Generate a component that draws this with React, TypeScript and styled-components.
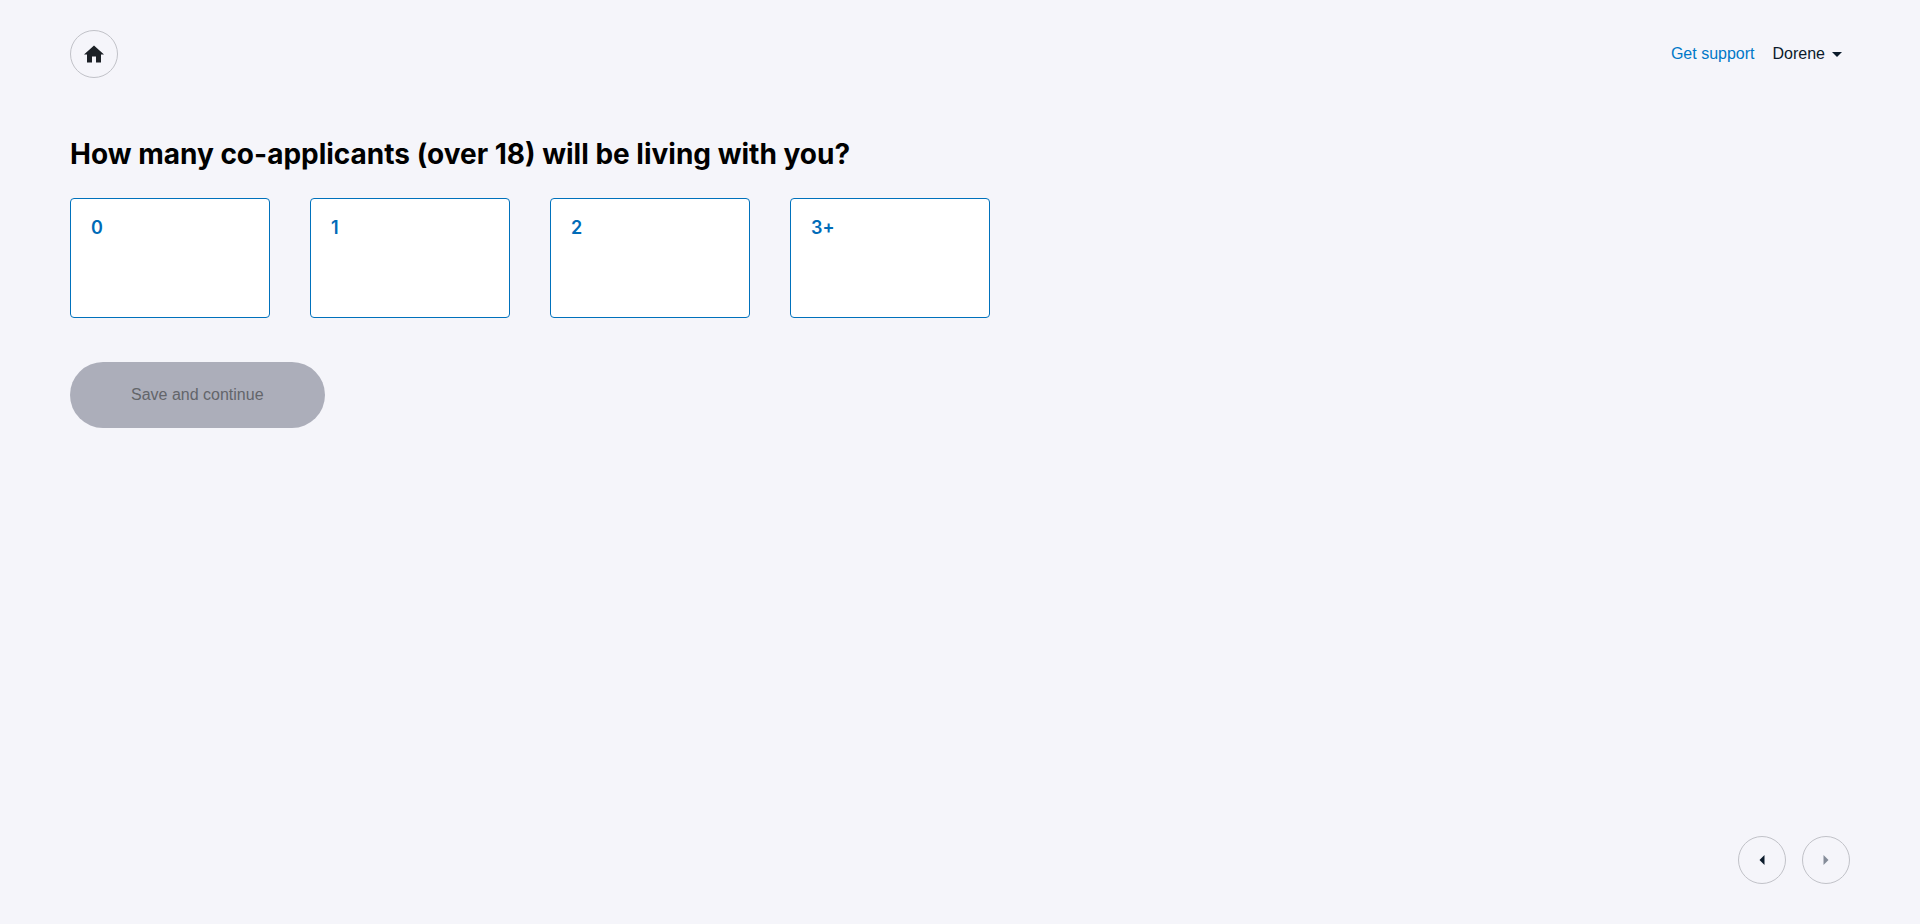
import React, { useState } from "react";
import styled, { createGlobalStyle } from "styled-components";

const GlobalStyle = createGlobalStyle`
  *, *::before, *::after { box-sizing: border-box; }
  body {
    margin: 0;
    background: #f5f5fa;
    color: #0b1b2b;
    font-family: "Liberation Sans", Arial, sans-serif;
    font-size: 16px;
    line-height: 24px;
  }
  button { font: inherit; cursor: pointer; }
  button:disabled { cursor: default; }
`;

const Page = styled.div`
  display: flex;
  flex-direction: column;
  min-height: 100vh;
  padding: 30px 70px 40px;
`;

const Header = styled.header`
  display: flex;
  align-items: center;
  justify-content: space-between;
`;

const Account = styled.nav`
  display: flex;
  align-items: center;
  gap: 18px;
`;

const SupportLink = styled.a`
  color: #0078c8;
  text-decoration: none;
`;

const UserMenu = styled.button`
  display: flex;
  align-items: center;
  gap: 7px;
  padding: 0 8px 0 0;
  border: 0;
  background: none;
  color: #0b1b2b;
`;

const RoundButton = styled.button`
  display: flex;
  align-items: center;
  justify-content: center;
  width: 48px;
  height: 48px;
  padding: 0;
  border: 1px solid #c1c2c8;
  border-radius: 50%;
  background: transparent;
  color: #0b1b2b;

  &:disabled { color: #858c99; }
`;

const Main = styled.main`
  display: flex;
  flex: 1;
  flex-direction: column;
  align-items: flex-start;
  padding-top: 56px;
`;

const Question = styled.h1`
  margin: 0 0 24px;
  color: #000;
  font-family: Inter, sans-serif;
  font-size: 28px;
  font-weight: 700;
  line-height: 40px;
`;

const Options = styled.div`
  display: flex;
  flex-wrap: wrap;
  gap: 40px;
`;

const OptionCard = styled.button<{ $selected: boolean }>`
  display: flex;
  align-items: flex-start;
  width: 200px;
  height: 120px;
  padding: 16px 20px;
  border: 1px solid #0071bc;
  border-radius: 4px;
  background: ${(p) => (p.$selected ? "#e3f1fb" : "#fff")};
  color: #006bb8;
  font-family: Inter, sans-serif;
  font-size: 18px;
  font-weight: 600;
  line-height: 26px;
`;

const SaveButton = styled.button`
  height: 66px;
  margin-top: 44px;
  padding: 0 61px;
  border: 0;
  border-radius: 33px;
  background: #0071bc;
  color: #fff;

  &:disabled {
    background: #acaeba;
    color: #63656a;
  }
`;

const Pager = styled.footer`
  display: flex;
  justify-content: flex-end;
  gap: 16px;
`;

const HomeIcon = () => (
  <svg width="24" height="24" viewBox="0 0 24 24" fill="#1c2126" aria-hidden="true">
    <path d="M10 20.5v-6h4v6h5v-8h3l-10-9-10 9h3v8z" />
  </svg>
);

const CaretDown = () => (
  <svg width="10" height="5" viewBox="0 0 10 5" fill="currentColor" aria-hidden="true">
    <path d="M0 0h10L5 5z" />
  </svg>
);

const CaretLeft = () => (
  <svg width="6" height="10" viewBox="0 0 6 10" fill="currentColor" aria-hidden="true">
    <path d="M5.5 0v10L.5 5z" />
  </svg>
);

const CaretRight = () => (
  <svg width="6" height="10" viewBox="0 0 6 10" fill="currentColor" aria-hidden="true">
    <path d="M.5 0v10l5-5z" />
  </svg>
);

const choices = ["0", "1", "2", "3+"];

export default function App() {
  const [selected, setSelected] = useState<string | null>(null);

  return (
    <>
      <GlobalStyle />
      <Page>
        <Header>
          <RoundButton type="button" aria-label="Home">
            <HomeIcon />
          </RoundButton>
          <Account>
            <SupportLink href="#support">Get support</SupportLink>
            <UserMenu type="button" aria-haspopup="menu">
              Dorene
              <CaretDown />
            </UserMenu>
          </Account>
        </Header>
        <Main>
          <Question id="question">How many co-applicants (over 18) will be living with you?</Question>
          <Options role="group" aria-labelledby="question">
            {choices.map((choice) => (
              <OptionCard
                key={choice}
                type="button"
                $selected={selected === choice}
                aria-pressed={selected === choice}
                onClick={() => setSelected(choice)}
              >
                {choice}
              </OptionCard>
            ))}
          </Options>
          <SaveButton type="button" disabled={selected === null}>
            Save and continue
          </SaveButton>
        </Main>
        <Pager>
          <RoundButton type="button" aria-label="Previous">
            <CaretLeft />
          </RoundButton>
          <RoundButton type="button" aria-label="Next" disabled={selected === null}>
            <CaretRight />
          </RoundButton>
        </Pager>
      </Page>
    </>
  );
}
